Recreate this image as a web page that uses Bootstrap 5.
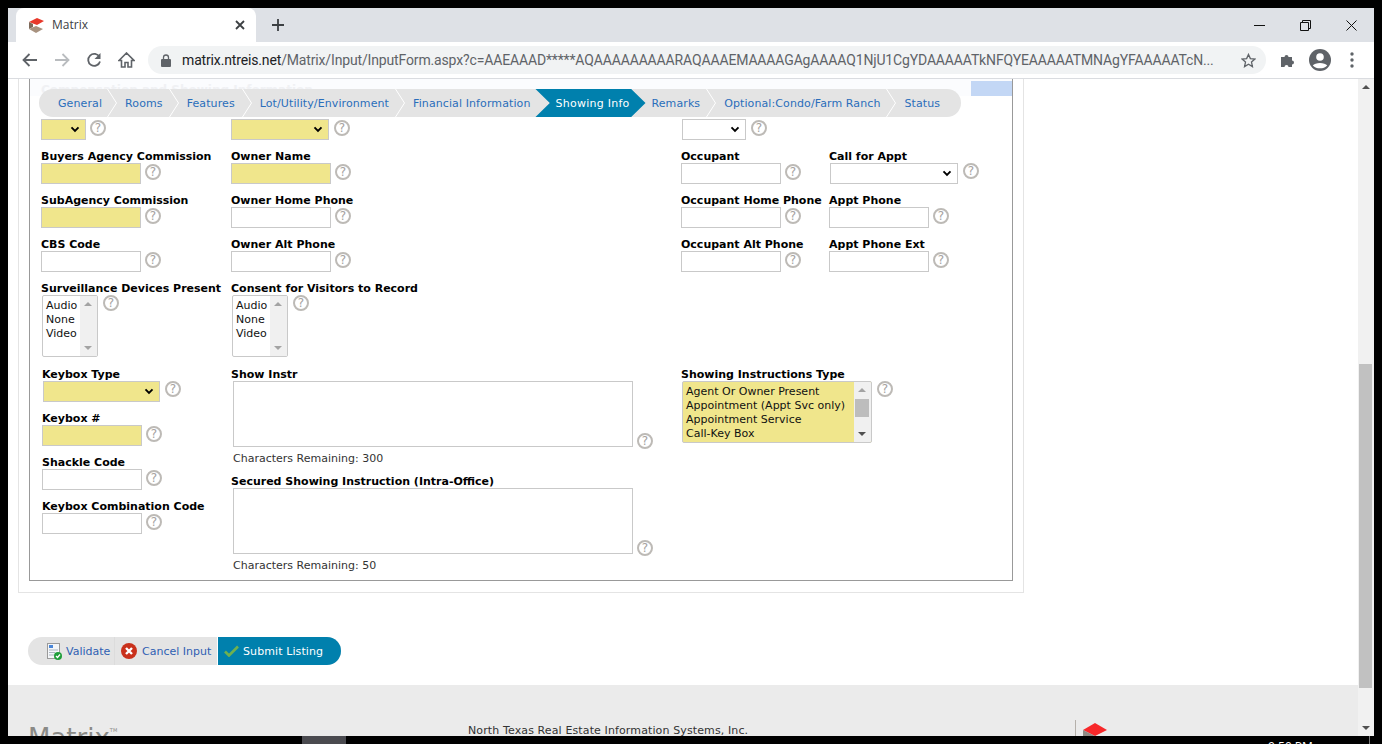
<!DOCTYPE html>
<html lang="en">
<head>
  <meta charset="UTF-8" />
  <meta name="viewport" content="width=device-width, initial-scale=1" />
  <title>Matrix</title>
  <link href="https://cdn.jsdelivr.net/npm/bootstrap@5.3.3/dist/css/bootstrap.min.css" rel="stylesheet" />
  <style>
    html, body { height: 100%; overflow: hidden; }
    body { background: #000; font-family: "DejaVu Sans", Verdana, sans-serif; font-size: 11px; color: #000; }

    /* window frame */
    .win-frame { height: 744px; padding: 8px; }
    .win-inner { height: 728px; background: #fff; }
    .tab-strip { height: 34px; background: #dee1e6; font-family: "Open Sans", "Noto Sans", sans-serif; }
    .page-tab { width: 240px; height: 34px; margin-left: 8px; background: #fff; border-radius: 8px 8px 0 0; padding: 0 11px 0 13px; font-size: 12px; color: #3c4043; }
    .tab-title { margin-left: 7px; }
    .tab-plus { margin-left: 16px; }
    .win-btn { width: 46px; height: 30px; }
    .tool-strip { height: 37px; background: #fff; border-bottom: 1px solid #dadce0; padding: 0 0 0 14px; }
    .nav-ico { width: 32px; }
    .addr-pill { width: 1118px; height: 28px; margin-left: -2px; background: #f1f3f4; border-radius: 14px; padding: 0 10px 0 13px; font-family: Roboto, "Open Sans", sans-serif; font-size: 14px; color: #5f6368; white-space: nowrap; }
    .addr-host { color: #202124; }
    .addr-text { margin-left: 11px; overflow: hidden; letter-spacing: -.15px; }
    .ext-ico { margin-left: 14px; }
    .user-ico { margin-left: 13px; }
    .dots-ico { margin-left: 19px; }

    /* page viewport */
    .view-port { height: 657px; overflow: hidden; }
    .page-area { width: 1350px; position: relative; overflow: hidden; }
    .scroll-col { width: 16px; background: #f1f1f1; position: relative; }
    .scroll-thumb { position: absolute; left: 1px; right: 2px; top: 285px; height: 324px; background: #c1c1c1; }
    .scroll-up, .scroll-down { position: absolute; left: 4px; width: 0; height: 0; border-left: 4px solid transparent; border-right: 4px solid transparent; }
    .scroll-up { top: 6px; border-bottom: 4px solid #505050; }
    .scroll-down { bottom: 6px; border-top: 4px solid #505050; }

    .outer-panel { width: 1006px; margin-left: 10px; height: 514px; border: 1px solid #e4e4e4; border-top: 0; padding-left: 10px; }
    .form-box { width: 984px; height: 502px; border: 1px solid #999; border-top: 0; }
    .form-top { height: 38px; position: relative; }
    .form-band { height: 17px; background: #fbfcfe; padding: 4px 0 0 11px; overflow: hidden; }
    .faded-head { font-size: 12px; font-weight: 700; color: #f0f1f4; line-height: 14px; }
    .blue-patch { position: absolute; right: 0; top: 2px; width: 41px; height: 15px; background: #c3d7f5; }

    /* wizard bar */
    .step-bar { position: absolute; left: 31px; top: 10px; width: 922px; height: 28px; background: #e4e4e4; border-radius: 14px; padding-left: 7px; }
    .step-item { position: relative; padding: 0 12px; height: 28px; line-height: 30px; color: #2a6ebb; white-space: nowrap; letter-spacing: .1px; }
    .step-first { padding-right: 11px; }
    .step-third { padding-right: 13px; }
    .step-item::after { content: ""; position: absolute; top: 0; right: -4px; width: 10px; height: 28px; background: url("data:image/svg+xml,%3Csvg xmlns='http://www.w3.org/2000/svg' width='10' height='28'%3E%3Cpath d='M.5 0 9.5 14 .5 28' fill='none' stroke='%23fff'/%3E%3C/svg%3E") no-repeat; }
    .step-item:last-child::after, .step-prev::after { display: none; }
    .step-active { color: #fff; padding: 0 10px 0 13px; letter-spacing: .25px; }
    .step-active::after { display: none; }
    .step-active::before { content: ""; position: absolute; z-index: 0; top: 0; bottom: 0; left: -7px; right: -6px; background: #0080ad; clip-path: polygon(0 0, 87% 0, 100% 50%, 87% 100%, 0 100%, 13% 50%); }
    .step-active span { position: relative; z-index: 1; }

    /* form grid */
    .field-grid { display: grid; grid-template-columns: 190px 450px 148px 1fr; padding: 2px 0 0 11px; }
    .field-cell { height: 44px; }
    .field-top { height: 30px; }
    .field-tall { height: 86px; }
    .fld-label { font-weight: 700; height: 14px; line-height: 16px; white-space: nowrap; }
    .fld-row { display: flex; align-items: flex-start; }
    input.fld-input { width: 100px; height: 21px; padding: 0 2px; border: 1px solid #c9c9c9; border-radius: 0; font-size: 11px; background-color: #fff; }
    input.fld-req { background-color: #f0e68c; }
    select.fld-select { height: 21px; padding: 0; border: 1px solid #c9c9c9; border-radius: 0; font-size: 11px; background-color: #fff; background-size: 10px 7px; background-position: right 5px center; background-image: url("data:image/svg+xml,%3Csvg xmlns='http://www.w3.org/2000/svg' viewBox='0 0 11 8'%3E%3Cpath d='M1.5 1.5 5.500 5.500 9.500 1.500' fill='none' stroke='%23000' stroke-width='2.200'/%3E%3C/svg%3E"); }
    select.fld-req { background-color: #f0e68c; }
    .sel-a { width: 45px; }
    .sel-b { width: 98px; }
    .sel-c { width: 64px; margin-left: 1px; }
    .sel-d { width: 128px; margin-left: 1px; }
    .sel-e { width: 117px; margin-left: 1px; }
    .help-ico { display: inline-flex; align-items: center; justify-content: center; width: 16px; height: 16px; margin: 1px 0 0 4px; border: 2px solid #bdbab6; border-radius: 50%; color: #a5a2a0; font-size: 12px; line-height: 1; flex: none; }
    .help-sel { margin: 0 0 0 5px; }
    .help-top { margin-top: 1px; }
    .help-sel-a { margin-left: 4px; }
    .help-area { margin: 0 0 -2px 4px; }

    .list-fake { display: flex; border: 1px solid #c9c9c9; border-radius: 2px; height: 62px; line-height: 14px; padding-top: 3px; position: relative; overflow: hidden; }
    .list-items { padding-left: 3px; white-space: nowrap; color: #111; }
    .list-bar { position: absolute; top: 0; right: 0; bottom: 0; width: 17px; background: #f0f0f0; }
    .list-bar::before, .list-bar::after { content: ""; position: absolute; left: 4px; border-left: 4px solid transparent; border-right: 4px solid transparent; }
    .list-bar::before { top: 6px; border-bottom: 4px solid #a3a3a3; }
    .list-bar::after { bottom: 6px; border-top: 4px solid #a3a3a3; }
    .list-short { width: 56px; margin-left: 1px; }
    .list-wide { width: 190px; margin-left: 1px; background: #f0e68c; }
    .list-wide .list-bar::after { border-top-color: #505050; }
    .list-thumb { position: absolute; left: 1px; right: 2px; top: 17px; height: 18px; background: #bdbdbd; }

    .lower-wrap { display: flex; padding-left: 11px; height: 200px; }
    .lower-left { width: 190px; padding-left: 1px; }
    .lower-mid { width: 450px; }
    .area-fake { width: 400px; height: 66px; margin-left: 2px; border: 1px solid #c9c9c9; border-radius: 0; padding: 2px; resize: none; display: block; }
    .chars-left { margin-left: 2px; line-height: 14px; color: #333; padding-top: 5px; height: 27px; }

    /* action bar */
    .action-bar { margin: 44px 0 0 20px; width: 313px; height: 28px; background: #e4e4e4; border-radius: 14px; overflow: hidden; color: #2f5fb3; }
    .act-link { white-space: nowrap; }
    .act-link span { padding-top: 2px; }
    .act-validate { width: 87px; padding-left: 19px; border-right: 1px solid #dcdcdc; }
    .act-cancel { width: 103px; padding-left: 6px; border-right: 1px solid #fff; }
    .act-cancel svg { margin-right: 5px; }
    .act-submit { flex: 1; padding-left: 6px; background: #0080ad; color: #fff; letter-spacing: .1px; }

    .page-foot { position: absolute; left: 0; right: 0; top: 606px; height: 60px; background: #ebebeb; }
    .foot-brand { position: absolute; left: 20px; top: 37px; font-size: 26px; line-height: 32px; color: #8a8a86; }
    .foot-brand sup { font-size: 5px; top: -15px; }
    .foot-org { position: absolute; left: 460px; top: 39px; line-height: 14px; color: #333; white-space: nowrap; letter-spacing: .12px; }
    .foot-rule { position: absolute; left: 1067px; top: 35px; width: 1px; height: 20px; background: #b5b0aa; }
    .foot-logo { position: absolute; left: 1075px; top: 38px; }

    /* task bar scrap under the window */
    .task-scrap { position: absolute; left: 0; right: 0; top: 736px; height: 8px; background: #000; overflow: hidden; }
    .task-app { position: absolute; left: 302px; top: 0; width: 44px; height: 8px; background: #4a4a4f; }
    .task-clock { position: absolute; left: 1268px; top: 4px; color: #fff; font-family: "Open Sans", sans-serif; font-size: 12px; line-height: 14px; }
    .task-end { position: absolute; left: 1369px; top: 0; width: 1px; height: 8px; background: #777; }
  </style>
</head>
<body>

<div class="win-frame">
  <div class="win-inner">

    <!-- Browser tabs -->
    <div class="tab-strip d-flex align-items-center">
      <div class="page-tab d-flex align-items-center">
        <svg width="16" height="17" viewBox="0 0 16 17"><path d="M0 5 8 1l7 3-7 4z" fill="#e8392b"/><path d="M0 5l4 2v3l-4 2z" fill="#7d6a5a"/><path d="M0 12l7-3 7 3-7 4z" fill="#a8927f"/></svg>
        <span class="tab-title flex-grow-1">Matrix</span>
        <svg width="10" height="10" viewBox="0 0 10 10"><path d="M1 1l8 8M9 1 1 9" stroke="#3c4043" stroke-width="1.800"/></svg>
      </div>
      <svg class="tab-plus" width="12" height="12" viewBox="0 0 12 12"><path d="M6 0v12M0 6h12" stroke="#3c4043" stroke-width="1.800"/></svg>
      <div class="ms-auto d-flex">
        <div class="win-btn d-flex align-items-center justify-content-center"><svg width="11" height="11" viewBox="0 0 11 11"><path d="M0 5.500h11" stroke="#111"/></svg></div>
        <div class="win-btn d-flex align-items-center justify-content-center"><svg width="11" height="11" viewBox="0 0 11 11"><path d="M.5 2.500h8v8h-8zM2.500 2.500v-2h8v8h-2" fill="none" stroke="#111"/></svg></div>
        <div class="win-btn d-flex align-items-center justify-content-center"><svg width="11" height="11" viewBox="0 0 11 11"><path d="M.5.5l10 10M10.500.5l-10 10" stroke="#111"/></svg></div>
      </div>
    </div>

    <!-- Browser toolbar -->
    <div class="tool-strip d-flex align-items-center">
      <div class="nav-ico"><svg width="16" height="14" viewBox="0 0 16 14"><path d="M15 7H2M7.500 1 1.500 7l6 6" fill="none" stroke="#5f6368" stroke-width="1.800"/></svg></div>
      <div class="nav-ico"><svg width="16" height="14" viewBox="0 0 16 14"><path d="M1 7h13M8.500 1l6 6-6 6" fill="none" stroke="#b9bcbf" stroke-width="1.800"/></svg></div>
      <div class="nav-ico"><svg width="16" height="16" viewBox="0 0 16 16"><path d="M13.500 5A6 6 0 1 0 14 9.500" fill="none" stroke="#5f6368" stroke-width="1.800"/><path d="M14.500 1v6h-6z" fill="#5f6368"/></svg></div>
      <div class="nav-ico"><svg width="17" height="16" viewBox="0 0 17 16"><path d="M1 8.500 8.500 1l7.500 7.500h-2.500V15h-3.500v-4.500H7V15H3.500V8.500z" fill="none" stroke="#5f6368" stroke-width="1.600"/></svg></div>
      <div class="addr-pill d-flex align-items-center">
        <svg width="10" height="13" viewBox="0 0 10 13"><path d="M2.500 5V3.500a2.500 2.500 0 0 1 5 0V5" fill="none" stroke="#5f6368" stroke-width="1.300"/><rect y="5" width="10" height="8" rx="1" fill="#5f6368"/></svg>
        <div class="addr-text"><span class="addr-host">matrix.ntreis.net</span>/Matrix/Input/InputForm.aspx?c=AAEAAAD*****AQAAAAAAAAARAQAAAEMAAAAGAgAAAAQ1NjU1CgYDAAAAATkNFQYEAAAAATMNAgYFAAAAATcN...</div>
        <svg class="ms-auto" width="15" height="15" viewBox="0 0 16 16"><path d="M8 1.500 10 6l4.800.500-3.600 3.200 1 4.800L8 12l-4.200 2.500 1-4.800L1.200 6.500 6 6z" fill="none" stroke="#5f6368" stroke-width="1.400"/></svg>
      </div>
      <svg class="ext-ico" width="16" height="16" viewBox="0 0 16 16"><path d="M1 5h3.500a2 2 0 1 1 4 0H12v3.500a2 2 0 1 1 0 4V15H8.500a2 2 0 1 0-4 0H1z" fill="#5f6368"/></svg>
      <svg class="user-ico" width="22" height="22" viewBox="0 0 22 22"><circle cx="11" cy="11" r="11" fill="#5f6368"/><circle cx="11" cy="8" r="3.800" fill="#fff"/><path d="M3.800 16.500c2-3.500 12.400-3.500 14.400 0-3.500 3.800-10.900 3.800-14.400 0z" fill="#fff"/></svg>
      <svg class="dots-ico" width="4" height="16" viewBox="0 0 4 16"><circle cx="2" cy="2" r="1.700" fill="#5f6368"/><circle cx="2" cy="8" r="1.700" fill="#5f6368"/><circle cx="2" cy="14" r="1.700" fill="#5f6368"/></svg>
    </div>

    <!-- Page -->
    <div class="view-port d-flex">
      <div class="page-area">
        <div class="outer-panel">
          <div class="form-box">
            <div class="form-top">
              <div class="form-band"><div class="faded-head">Compensation and Showing Information</div></div>
              <div class="blue-patch"></div>
            </div>

            <div class="field-grid">
              <div class="field-top fld-row"><select class="form-select fld-select fld-req sel-a"></select><span class="help-ico help-sel help-top help-sel-a">?</span></div>
              <div class="field-top fld-row"><select class="form-select fld-select fld-req sel-b"></select><span class="help-ico help-sel help-top">?</span></div>
              <div class="field-top fld-row"><select class="form-select fld-select sel-c"></select><span class="help-ico help-sel help-top">?</span></div>
              <div class="field-top"></div>

              <div class="field-cell"><div class="fld-label">Buyers Agency Commission</div><div class="fld-row"><input class="form-control fld-input fld-req" /><span class="help-ico">?</span></div></div>
              <div class="field-cell"><div class="fld-label">Owner Name</div><div class="fld-row"><input class="form-control fld-input fld-req" /><span class="help-ico">?</span></div></div>
              <div class="field-cell"><div class="fld-label">Occupant</div><div class="fld-row"><input class="form-control fld-input" /><span class="help-ico">?</span></div></div>
              <div class="field-cell"><div class="fld-label">Call for Appt</div><div class="fld-row"><select class="form-select fld-select sel-d"></select><span class="help-ico help-sel">?</span></div></div>

              <div class="field-cell"><div class="fld-label">SubAgency Commission</div><div class="fld-row"><input class="form-control fld-input fld-req" /><span class="help-ico">?</span></div></div>
              <div class="field-cell"><div class="fld-label">Owner Home Phone</div><div class="fld-row"><input class="form-control fld-input" /><span class="help-ico">?</span></div></div>
              <div class="field-cell"><div class="fld-label">Occupant Home Phone</div><div class="fld-row"><input class="form-control fld-input" /><span class="help-ico">?</span></div></div>
              <div class="field-cell"><div class="fld-label">Appt Phone</div><div class="fld-row"><input class="form-control fld-input" /><span class="help-ico">?</span></div></div>

              <div class="field-cell"><div class="fld-label">CBS Code</div><div class="fld-row"><input class="form-control fld-input" /><span class="help-ico">?</span></div></div>
              <div class="field-cell"><div class="fld-label">Owner Alt Phone</div><div class="fld-row"><input class="form-control fld-input" /><span class="help-ico">?</span></div></div>
              <div class="field-cell"><div class="fld-label">Occupant Alt Phone</div><div class="fld-row"><input class="form-control fld-input" /><span class="help-ico">?</span></div></div>
              <div class="field-cell"><div class="fld-label">Appt Phone Ext</div><div class="fld-row"><input class="form-control fld-input" /><span class="help-ico">?</span></div></div>

              <div class="field-tall"><div class="fld-label">Surveillance Devices Present</div><div class="fld-row"><div class="list-fake list-short"><div class="list-items">Audio<br>None<br>Video</div><div class="list-bar"></div></div><span class="help-ico help-sel">?</span></div></div>
              <div class="field-tall"><div class="fld-label">Consent for Visitors to Record</div><div class="fld-row"><div class="list-fake list-short"><div class="list-items">Audio<br>None<br>Video</div><div class="list-bar"></div></div><span class="help-ico help-sel">?</span></div></div>
              <div class="field-tall"></div>
              <div class="field-tall"></div>
            </div>

            <div class="lower-wrap">
              <div class="lower-left">
                <div class="field-cell"><div class="fld-label">Keybox Type</div><div class="fld-row"><select class="form-select fld-select fld-req sel-e"></select><span class="help-ico help-sel">?</span></div></div>
                <div class="field-cell"><div class="fld-label">Keybox #</div><div class="fld-row"><input class="form-control fld-input fld-req" /><span class="help-ico">?</span></div></div>
                <div class="field-cell"><div class="fld-label">Shackle Code</div><div class="fld-row"><input class="form-control fld-input" /><span class="help-ico">?</span></div></div>
                <div class="field-cell"><div class="fld-label">Keybox Combination Code</div><div class="fld-row"><input class="form-control fld-input" /><span class="help-ico">?</span></div></div>
              </div>
              <div class="lower-mid">
                <div class="fld-label">Show Instr</div>
                <div class="fld-row align-items-end"><textarea class="form-control area-fake"></textarea><span class="help-ico help-area">?</span></div>
                <div class="chars-left">Characters Remaining: 300</div>
                <div class="fld-label">Secured Showing Instruction (Intra-Office)</div>
                <div class="fld-row align-items-end"><textarea class="form-control area-fake"></textarea><span class="help-ico help-area">?</span></div>
                <div class="chars-left">Characters Remaining: 50</div>
              </div>
              <div>
                <div class="fld-label">Showing Instructions Type</div>
                <div class="fld-row"><div class="list-fake list-wide"><div class="list-items">Agent Or Owner Present<br>Appointment (Appt Svc only)<br>Appointment Service<br>Call-Key Box</div><div class="list-bar"><div class="list-thumb"></div></div></div><span class="help-ico help-sel">?</span></div>
              </div>
            </div>
          </div>
        </div>

        <!-- Wizard steps sit over the scrolled form -->
        <div class="step-bar d-flex">
          <div class="step-item step-first">General</div>
          <div class="step-item">Rooms</div>
          <div class="step-item step-third">Features</div>
          <div class="step-item">Lot/Utility/Environment</div>
          <div class="step-item step-prev">Financial Information</div>
          <div class="step-item step-active"><span>Showing Info</span></div>
          <div class="step-item">Remarks</div>
          <div class="step-item">Optional:Condo/Farm Ranch</div>
          <div class="step-item">Status</div>
        </div>

        <div class="action-bar d-flex">
          <div class="act-link act-validate d-flex align-items-center">
            <svg class="me-1" width="15" height="17" viewBox="0 0 15 17"><rect x=".5" y=".5" width="12" height="15" fill="#f4f6f8" stroke="#9a9a9a"/><rect x="2" y="2" width="4" height="3" fill="#4a86d8"/><path d="M2 7h9M2 9.500h6M2 12h5" stroke="#a9b4c0"/><circle cx="11" cy="13" r="4" fill="#1f9e3a"/><path d="M9 13l1.500 1.500L13 11.500" fill="none" stroke="#fff" stroke-width="1.300"/></svg>
            <span>Validate</span>
          </div>
          <div class="act-link act-cancel d-flex align-items-center">
            <svg width="16" height="16" viewBox="0 0 16 16"><circle cx="8" cy="8" r="8" fill="#c9311c"/><path d="M5 5l6 6M11 5l-6 6" stroke="#fff" stroke-width="2.400"/></svg>
            <span>Cancel Input</span>
          </div>
          <div class="act-link act-submit d-flex align-items-center">
            <svg class="me-1" width="15" height="12" viewBox="0 0 15 12"><path d="M1 6.500 5 10.500 14 1.500" fill="none" stroke="#6fb04f" stroke-width="2.600"/></svg>
            <span>Submit Listing</span>
          </div>
        </div>

        <div class="page-foot">
          <div class="foot-brand">Matrix<sup>TM</sup></div>
          <div class="foot-org">North Texas Real Estate Information Systems, Inc.</div>
          <div class="foot-rule"></div>
          <svg class="foot-logo" width="25" height="22" viewBox="0 0 25 22"><path d="M12 0 24 7 12 13 0 7z" fill="#f7282a"/><path d="M0 7l12 6v9L0 16z" fill="#8f8a84"/></svg>
        </div>
      </div>
      <div class="scroll-col">
        <div class="scroll-up"></div>
        <div class="scroll-thumb"></div>
        <div class="scroll-down"></div>
      </div>
    </div>
  </div>
</div>

<div class="task-scrap">
  <div class="task-app"></div>
  <div class="task-clock">9:50 PM</div>
  <div class="task-end"></div>
</div>

<script src="https://cdn.jsdelivr.net/npm/bootstrap@5.3.3/dist/js/bootstrap.bundle.min.js"></script>
</body>
</html>
